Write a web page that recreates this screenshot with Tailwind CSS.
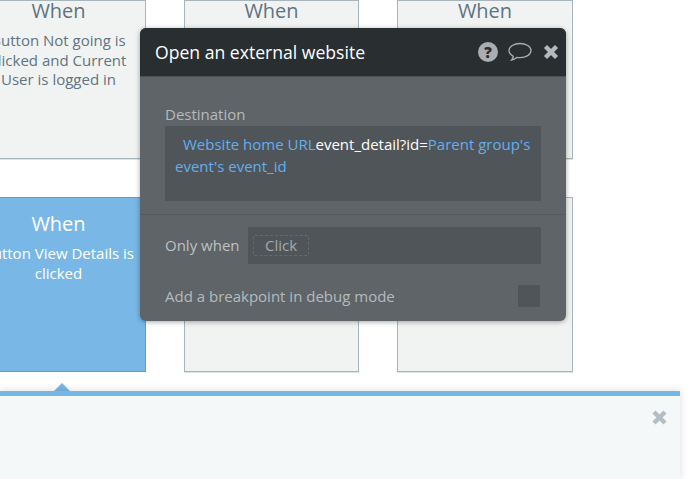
<!doctype html>
<html lang="en">
<head>
	<title>Open an external website</title>
	<meta charset="UTF-8">
	<script src="https://cdn.jsdelivr.net/npm/@tailwindcss/browser@4"></script>
</head>
<body class="relative h-[479px] w-[690px] overflow-hidden bg-white font-['Open_Sans',sans-serif]">
	<!-- workflow cards -->
	<div class="ml-[-29px] grid w-[602px] grid-cols-[175px_175px_176px] gap-x-[38px] gap-y-[38px]">
		<div class="flex h-[159px] flex-col items-center border border-[#a9b5bd] bg-[#f1f3f3] text-center text-[#5f7381] shadow-[0_1px_0_#dfe3e5]">
			<div class="text-[20px] leading-[19px]">When</div>
			<div class="mt-[11px] w-[150px] text-[15px] leading-[19.500px]">Button Not going is clicked and Current User is logged in</div>
		</div>
		<div class="flex h-[159px] flex-col items-center border border-[#a9b5bd] bg-[#f1f3f3] text-center text-[#5f7381] shadow-[0_1px_0_#dfe3e5]">
			<div class="text-[20px] leading-[19px]">When</div>
		</div>
		<div class="flex h-[159px] flex-col items-center border border-[#a9b5bd] bg-[#f1f3f3] text-center text-[#5f7381] shadow-[0_1px_0_#dfe3e5]">
			<div class="text-[20px] leading-[19px]">When</div>
		</div>
		<div class="flex h-[175px] flex-col items-center border border-[#4fa3dc] bg-[#79b8e6] pt-[15px] text-center text-white">
			<div class="text-[20px] leading-[22px]">When</div>
			<div class="mt-[8px] w-[175px] text-[15px] leading-[20px]">Button View Details is clicked</div>
		</div>
		<div class="h-[175px] border border-[#a9b5bd] bg-[#f1f3f3] shadow-[0_1px_0_#dfe3e5]"></div>
		<div class="h-[175px] border border-[#a9b5bd] bg-[#f1f3f3] shadow-[0_1px_0_#dfe3e5]"></div>
	</div>

	<!-- bottom panel -->
	<div class="absolute left-[53px] top-[383px] h-0 w-0 border-x-[9px] border-b-[9px] border-x-transparent border-b-[#79b8e6]"></div>
	<div class="absolute left-0 top-[391px] h-[88px] w-[680px] border-t-[5px] border-[#74b6e6] bg-[#f5f8f9] shadow-[0_0_8px_rgba(0,0,0,0.15)]">
		<svg class="absolute right-[12px] top-[13px] h-[17px] w-[17px]" viewBox="0 0 17 17"><path d="M3 3L14 14M14 3L3 14" stroke="#b4bdc4" stroke-width="4.400"/></svg>
	</div>

	<!-- action editor -->
	<div class="absolute left-[140px] top-[28px] w-[426px] overflow-hidden rounded-[6px] bg-[#5f6468] shadow-[0_1px_5px_rgba(0,0,0,0.35)]">
		<div class="flex h-[49px] items-center justify-between border-b border-[#4c5154] bg-[#292f31] pl-[15px] pr-[7px]">
			<span class="text-[17.600px] text-white">Open an external website</span>
			<div class="flex items-center">
				<svg class="h-[20px] w-[20px]" viewBox="0 0 20 20"><circle cx="10" cy="10" r="10" fill="#a8aeb1"/><text x="10" y="15.500" text-anchor="middle" font-size="15" font-weight="800" font-family="Open Sans" fill="#292f31">?</text></svg>
				<svg class="ml-[10px] h-[20px] w-[24px]" viewBox="0 0 24 20"><path d="M12 1.500C6 1.500 1 4.600 1 8.600c0 2.400 1.700 4.400 4.300 5.700-.2 1.500-1 2.800-1.800 3.800 2-.4 4-1.500 5.300-2.700 1 .2 2.100.3 3.200.3 6 0 11-3.100 11-7.100S18 1.500 12 1.500z" fill="none" stroke="#a8aeb1" stroke-width="1.300"/></svg>
				<svg class="ml-[11px] h-[16px] w-[16px]" viewBox="0 0 16 16"><path d="M2.500 2.500L13.500 13.500M13.500 2.500L2.500 13.500" stroke="#b4babd" stroke-width="4.400"/></svg>
			</div>
		</div>
		<div class="px-[25px] pt-[27px]">
			<div class="text-[15px] leading-[20px] text-[#b5babd]">Destination</div>
			<div class="mt-[2px] h-[75px] bg-[#505559] px-[10px] pt-[7px] text-[15px] leading-[22px] text-[#62aef0]">
				<span class="pl-[8px]">Website home URL</span><span class="text-white">event_detail?id=</span>Parent group's event's event_id
			</div>
		</div>
		<div class="mt-[13px] border-t border-[#555a5e]"></div>
		<div class="flex items-center px-[25px] pt-[12px]">
			<span class="w-[83px] text-[15px] text-[#bcc1c4]">Only when</span>
			<div class="flex h-[37px] flex-1 items-center bg-[#505559] px-[5px]">
				<span class="flex h-[21px] w-[56px] items-center justify-center rounded-[2px] border border-dashed border-[#64696d] text-[15px] text-[#a3a8ab]">Click</span>
			</div>
		</div>
		<div class="flex items-center justify-between pb-[13px] pl-[25px] pr-[26px] pt-[21px]">
			<span class="text-[15px] text-[#b5babd]">Add a breakpoint in debug mode</span>
			<div class="h-[22px] w-[22px] bg-[#505559]"></div>
		</div>
	</div>
</body>
</html>
